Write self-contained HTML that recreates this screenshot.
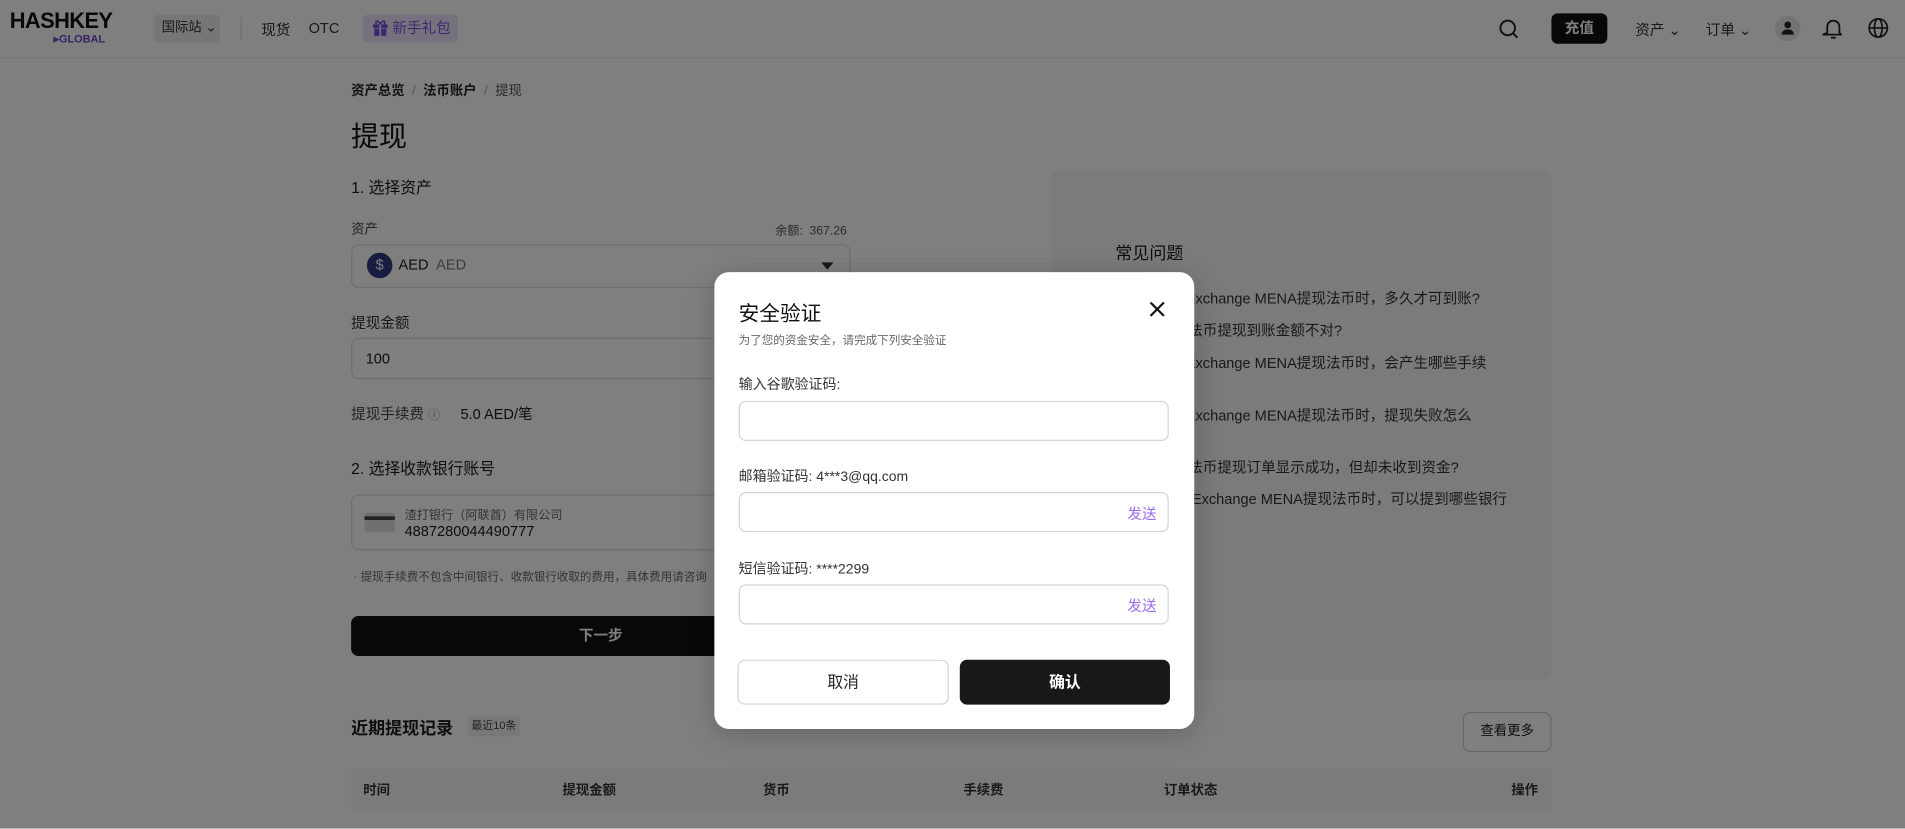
<!DOCTYPE html>
<html><head><meta charset="utf-8">
<style>
html,body{margin:0;padding:0;width:1905px;height:828px;overflow:hidden;background:#fff;}
#w{position:absolute;left:0;top:0;width:1568px;height:682px;transform:scale(1.21492);transform-origin:0 0;font-family:"Liberation Sans","Noto Sans CJK SC",sans-serif;color:#1a1a1a;background:#fff;}
.a{position:absolute;white-space:nowrap;}
.box{position:absolute;border:1px solid #dcdcdc;border-radius:6px;box-sizing:border-box;}
#ov{position:absolute;left:0;top:0;width:1568px;height:682px;background:rgba(0,0,0,0.5);}
#m{position:absolute;left:588px;top:224px;width:395px;height:376px;background:#fff;border-radius:12px;box-shadow:0 4px 24px rgba(0,0,0,.2);}
.inp{position:absolute;left:20px;width:354px;height:33px;border:1px solid #d4d4d4;border-radius:6px;box-sizing:border-box;}
.send{position:absolute;right:9px;top:8px;font-size:12px;color:#9b6af0;}
</style></head><body><div id="w">
<div class="a" style="left:0;top:47px;width:1568px;height:1px;background:#eee"></div>
<div class="a" style="left:8px;top:7px;font-size:18px;font-weight:bold;letter-spacing:-0.5px;color:#111">HASHKEY</div>
<div class="a" style="left:44px;top:27px;font-size:9px;font-weight:bold;color:#6d45c9">▸GLOBAL</div>
<div class="a" style="left:127px;top:12px;width:54px;height:23px;background:#ededed;border-radius:4px;font-size:11px;line-height:23px;text-indent:6px;color:#333">国际站 ⌄</div>
<div class="a" style="left:198px;top:14px;width:1px;height:19px;background:#ddd"></div>
<div class="a" style="left:215px;top:16px;font-size:12px;color:#333">现货</div>
<div class="a" style="left:254px;top:16px;font-size:12px;color:#333">OTC</div>
<div class="a" style="left:299px;top:12px;width:78px;height:23px;background:#ebe3fb;border-radius:4px;font-size:12px;line-height:23px;color:#7b4ee0"><span style="margin-left:24px">新手礼包</span></div>
<svg class="a" style="left:306px;top:16px" width="14" height="14" viewBox="0 0 14 14"><rect x="1" y="4" width="12" height="3" fill="#7b4ee0"/><rect x="2" y="7.5" width="10" height="6" fill="#7b4ee0"/><rect x="6.3" y="4" width="1.4" height="10" fill="#ebe3fb"/><path d="M7 4C5 0 2 1 4 4M7 4C9 0 12 1 10 4" fill="none" stroke="#7b4ee0" stroke-width="1.3"/></svg>
<svg class="a" style="left:1233px;top:15px" width="18" height="18" viewBox="0 0 18 18"><circle cx="8" cy="8" r="6" fill="none" stroke="#222" stroke-width="1.6"/><path d="M12.5 12.5L16 16" stroke="#222" stroke-width="1.6"/></svg>
<div class="a" style="left:1277px;top:11px;width:46px;height:25px;background:#111;border-radius:5px;color:#fff;font-size:12px;font-weight:bold;line-height:25px;text-align:center">充值</div>
<div class="a" style="left:1346px;top:16px;font-size:12px;color:#333">资产 ⌄</div>
<div class="a" style="left:1404px;top:16px;font-size:12px;color:#333">订单 ⌄</div>
<div class="a" style="left:1461px;top:13px;width:21px;height:21px;border-radius:50%;background:#e6e6e6"></div>
<svg class="a" style="left:1465px;top:16px" width="13" height="14" viewBox="0 0 13 14"><circle cx="6.5" cy="4.5" r="2.8" fill="#222"/><path d="M1.5 12.5c0-3 2.2-4.3 5-4.3s5 1.3 5 4.3z" fill="#222"/></svg>
<svg class="a" style="left:1500px;top:14px" width="18" height="19" viewBox="0 0 18 19"><path d="M4 13V8a5 5 0 0 1 10 0v5l1.5 1.5h-15z" fill="none" stroke="#222" stroke-width="1.5" stroke-linejoin="round"/><path d="M7 17h4" stroke="#222" stroke-width="1.5"/></svg>
<svg class="a" style="left:1537px;top:14px" width="18" height="18" viewBox="0 0 18 18"><circle cx="9" cy="9" r="7.5" fill="none" stroke="#222" stroke-width="1.4"/><ellipse cx="9" cy="9" rx="3.2" ry="7.5" fill="none" stroke="#222" stroke-width="1.4"/><path d="M1.5 9h15" stroke="#222" stroke-width="1.4"/></svg>
<div class="a" style="left:289px;top:66px;font-size:11px;font-weight:bold;color:#222">资产总览 <span style="color:#aaa;font-weight:normal">&nbsp;/&nbsp;</span> 法币账户 <span style="color:#aaa;font-weight:normal">&nbsp;/&nbsp;</span> <span style="font-weight:normal;color:#555">提现</span></div>
<div class="a" style="left:289px;top:93px;font-size:23px;color:#111">提现</div>
<div class="a" style="left:289px;top:144px;font-size:13px">1. 选择资产</div>
<div class="a" style="left:289px;top:180px;font-size:11px;color:#444">资产</div>
<div class="a" style="left:638px;top:181px;font-size:10px;color:#555">余额:&nbsp; 367.26</div>
<div class="box" style="left:289px;top:201px;width:411px;height:36px"></div>
<div class="a" style="left:302px;top:208px;width:21px;height:21px;border-radius:50%;background:#2c3a80;color:#fff;font-size:12px;text-align:center;line-height:21px">$</div>
<div class="a" style="left:328px;top:211px;font-size:12px">AED <span style="color:#777;margin-left:3px">AED</span></div>
<div class="a" style="left:676px;top:216px;width:0;height:0;border-left:5px solid transparent;border-right:5px solid transparent;border-top:6px solid #333"></div>
<div class="a" style="left:289px;top:257px;font-size:12px;color:#333">提现金额</div>
<div class="box" style="left:289px;top:278px;width:411px;height:34px"></div>
<div class="a" style="left:301px;top:288px;font-size:12px">100</div>
<div class="a" style="left:289px;top:332px;font-size:12px;color:#444">提现手续费 <span style="color:#999;font-size:10px">ⓘ</span></div>
<div class="a" style="left:379px;top:332px;font-size:12px">5.0 AED/笔</div>
<div class="a" style="left:289px;top:375px;font-size:13px">2. 选择收款银行账号</div>
<div class="box" style="left:289px;top:407px;width:411px;height:46px"></div>
<div class="a" style="left:300px;top:422px;width:25px;height:16px;background:#e0e0e0;border-radius:2px"><div style="margin-top:3px;height:3px;background:#444"></div></div>
<div class="a" style="left:333px;top:415px;font-size:10px;color:#666">渣打银行（阿联酋）有限公司</div>
<div class="a" style="left:333px;top:430px;font-size:12px">4887280044490777</div>
<div class="a" style="left:291px;top:467px;font-size:9.5px;color:#666">· 提现手续费不包含中间银行、收款银行收取的费用，具体费用请咨询</div>
<div class="a" style="left:289px;top:507px;width:411px;height:33px;background:#111;border-radius:6px;color:#fff;font-size:12px;font-weight:bold;text-align:center;line-height:33px">下一步</div>
<div class="a" style="left:289px;top:589px;font-size:14px;font-weight:bold">近期提现记录</div>
<div class="a" style="left:385px;top:589px;height:17px;padding:0 3px;background:#f0f0f0;border-radius:3px;font-size:9px;line-height:17px;color:#444">最近10条</div>
<div class="a" style="left:1204px;top:586px;width:73px;height:33px;border:1px solid #ccc;border-radius:6px;box-sizing:border-box;font-size:11px;text-align:center;line-height:31px">查看更多</div>
<div class="a" style="left:289px;top:632px;width:988px;height:34px;background:#f6f6f6"></div>
<div class="a" style="left:299px;top:642px;font-size:11px;font-weight:bold;color:#333">时间</div>
<div class="a" style="left:463px;top:642px;font-size:11px;font-weight:bold;color:#333">提现金额</div>
<div class="a" style="left:628px;top:642px;font-size:11px;font-weight:bold;color:#333">货币</div>
<div class="a" style="left:793px;top:642px;font-size:11px;font-weight:bold;color:#333">手续费</div>
<div class="a" style="left:958px;top:642px;font-size:11px;font-weight:bold;color:#333">订单状态</div>
<div class="a" style="left:1244px;top:642px;font-size:11px;font-weight:bold;color:#333">操作</div>
<div class="a" style="left:865px;top:140px;width:412px;height:420px;background:#f6f6f6;border-radius:8px"></div>
<div class="a" style="left:918px;top:198px;font-size:14px">常见问题</div>
<div class="a" style="left:924px;top:238px;font-size:12px;line-height:17px;color:#333">HashKey Exchange MENA提现法币时，多久才可到账?</div>
<div class="a" style="left:918px;top:264px;font-size:12px;line-height:17px;color:#333">为什么我的法币提现到账金额不对?</div>
<div class="a" style="left:924px;top:291px;font-size:12px;line-height:17px;color:#333">HashKey Exchange MENA提现法币时，会产生哪些手续<br>费?</div>
<div class="a" style="left:924px;top:334px;font-size:12px;line-height:17px;color:#333">HashKey Exchange MENA提现法币时，提现失败怎么<br>办?</div>
<div class="a" style="left:918px;top:377px;font-size:12px;line-height:17px;color:#333">为什么我的法币提现订单显示成功，但却未收到资金?</div>
<div class="a" style="left:929px;top:403px;font-size:12px;line-height:17px;color:#333">HashKey Exchange MENA提现法币时，可以提到哪些银行</div>
<div id="ov"></div>
<div id="m">
<div class="a" style="left:20px;top:20px;font-size:17px;color:#111">安全验证</div>
<svg class="a" style="left:358px;top:24px" width="13" height="13" viewBox="0 0 13 13"><path d="M1 1L12 12M12 1L1 12" stroke="#111" stroke-width="1.8"/></svg>
<div class="a" style="left:20px;top:48px;font-size:9.5px;color:#666">为了您的资金安全，请完成下列安全验证</div>
<div class="a" style="left:20px;top:84px;font-size:11.5px;color:#333">输入谷歌验证码:</div>
<div class="inp" style="top:106px"></div>
<div class="a" style="left:20px;top:160px;font-size:11.5px;color:#333">邮箱验证码: 4***3@qq.com</div>
<div class="inp" style="top:181px"><span class="send">发送</span></div>
<div class="a" style="left:20px;top:236px;font-size:11.5px;color:#333">短信验证码: ****2299</div>
<div class="inp" style="top:257px"><span class="send">发送</span></div>
<div class="a" style="left:19px;top:319px;width:174px;height:37px;border:1px solid #d4d4d4;border-radius:6px;box-sizing:border-box;font-size:13px;text-align:center;line-height:35px;color:#222">取消</div>
<div class="a" style="left:202px;top:319px;width:173px;height:37px;background:#18181a;border-radius:6px;font-size:13px;font-weight:bold;text-align:center;line-height:37px;color:#fff">确认</div>
</div>
</div></body></html>
